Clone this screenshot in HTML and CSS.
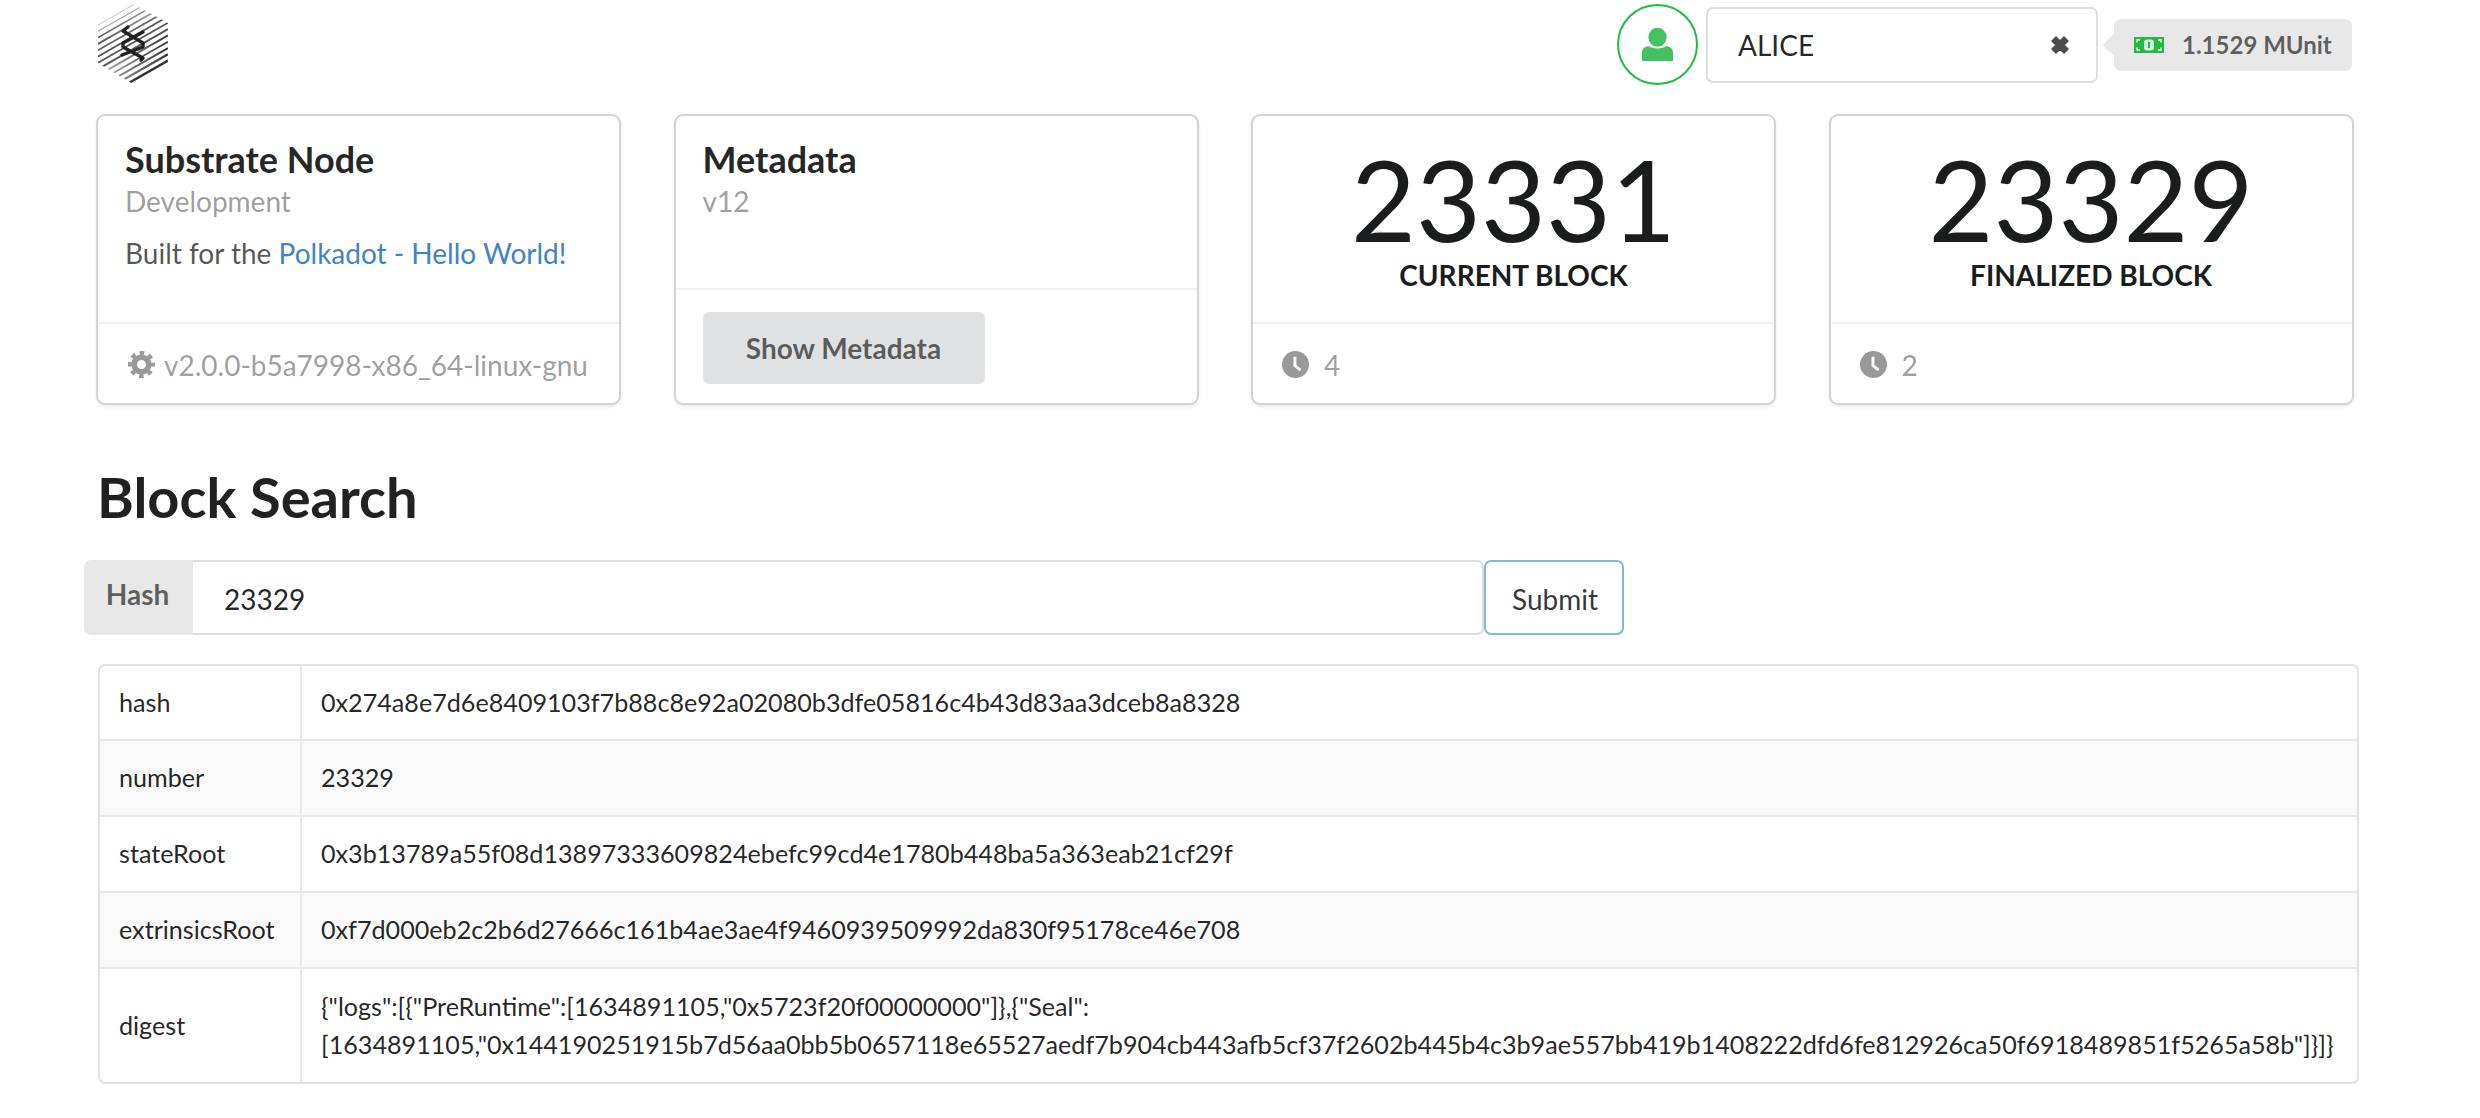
FILE: index.html
```html
<!DOCTYPE html>
<html lang="en">
<head>
<meta charset="utf-8">
<title>Substrate Front End</title>
<link rel="stylesheet" href="styles.css">
</head>
<body>
<div class="page">
  <header class="topbar">
    <svg class="logo" viewBox="0 0 70 80" aria-hidden="true">
      <defs>
        <clipPath id="hex"><path d="M35 0L70 19V59L35 80L0 59V19Z"/></clipPath>
        <linearGradient id="fadeTop" gradientUnits="userSpaceOnUse" x1="0" y1="0" x2="70" y2="0"><stop offset="0" stop-color="#555"/><stop offset="1" stop-color="#bbb"/></linearGradient>
        <linearGradient id="fadeBottom" gradientUnits="userSpaceOnUse" x1="0" y1="0" x2="70" y2="0"><stop offset="0" stop-color="#bbb"/><stop offset="0.6" stop-color="#666"/><stop offset="1" stop-color="#333"/></linearGradient>
      </defs>
      <g clip-path="url(#hex)" fill="none">
        <path d="M0 21L70 -19" stroke="#c4c4c4" stroke-width="1"/>
        <path d="M0 27.300L70 -12.700" stroke="#aaa" stroke-width="1.200"/>
        <path d="M0 33.600L70 -6.400" stroke="url(#fadeTop)" stroke-width="1.600"/>
        <path d="M0 39.900L70 -0.100" stroke="url(#fadeTop)" stroke-width="1.800"/>
        <path d="M0 46.200L70 6.200" stroke="#666" stroke-width="1.800"/>
        <path d="M0 52.500L70 12.500" stroke="#555" stroke-width="1.800"/>
        <path d="M0 58.800L70 18.800" stroke="#555" stroke-width="1.800"/>
        <path d="M0 65.100L70 25.100" stroke="#555" stroke-width="1.800"/>
        <path d="M0 71.400L70 31.400" stroke="url(#fadeBottom)" stroke-width="1.800"/>
        <path d="M0 77.700L70 37.700" stroke="url(#fadeBottom)" stroke-width="1.800"/>
        <path d="M0 84L70 44" stroke="url(#fadeBottom)" stroke-width="2"/>
        <path d="M0 90.300L70 50.300" stroke="url(#fadeBottom)" stroke-width="2.200"/>
        <path d="M0 96.600L70 56.600" stroke="#333" stroke-width="2.400"/>
      </g>
      <path d="M30 23L25 27L45 39V43L24 51M45 28L25 39V43L45 54L43 56" fill="none" stroke="#222" stroke-width="3.400" stroke-linejoin="round" stroke-linecap="round"/>
    </svg>
    <div class="account">
      <div class="avatar">
        <svg class="avatar-icon" viewBox="0 0 34 36" aria-hidden="true"><ellipse cx="17" cy="10" rx="10" ry="10.500" fill="#45c162"/><path d="M0 36V27C0 22 4 20 8 20C11 23 23 23 26 20C30 20 34 22 34 27V36Z" fill="#45c162"/></svg>
      </div>
      <div class="select">
        <span>ALICE</span>
        <svg class="close-icon" viewBox="0 0 20 20" aria-hidden="true"><path d="M2 6L6 2L10 6L14 2L18 6L14 10L18 14L14 18L10 14L6 18L2 14L6 10Z" fill="#4b4b4b" stroke="#4b4b4b" stroke-width="1.500" stroke-linejoin="round"/></svg>
      </div>
      <div class="balance">
        <svg class="bill" viewBox="0 0 30 16" aria-hidden="true"><rect width="30" height="16" fill="#21ba45"/><rect x="10" y="2.500" width="10" height="11" rx="3" fill="#d8f3de"/><path d="M3 5.500V3H6M24 3H27V5.500M27 10.500V13H24M6 13H3V10.500" fill="none" stroke="#fff" stroke-width="1.500"/><path d="M15 5V11" stroke="#21ba45" stroke-width="2"/></svg>
        <span>1.1529 MUnit</span>
      </div>
    </div>
  </header>

  <section class="cards">
    <article class="card">
      <div class="card-body">
        <h2 class="card-title">Substrate Node</h2>
        <div class="meta">Development</div>
        <p class="desc">Built for the <a href="#">Polkadot - Hello World!</a></p>
      </div>
      <div class="card-foot">
        <svg class="foot-icon" viewBox="0 0 24 24" aria-hidden="true"><circle cx="12" cy="12" r="6.500" fill="none" stroke="#999" stroke-width="5"/><circle cx="12" cy="12" r="10.300" fill="none" stroke="#999" stroke-width="3.400" stroke-dasharray="4.050 4.040" stroke-dashoffset="2"/></svg>
        <span>v2.0.0-b5a7998-x86_64-linux-gnu</span>
      </div>
    </article>
    <article class="card">
      <div class="card-body">
        <h2 class="card-title">Metadata</h2>
        <div class="meta">v12</div>
      </div>
      <div class="card-foot button-foot">
        <button class="show-btn" type="button">Show Metadata</button>
      </div>
    </article>
    <article class="card">
      <div class="card-body stat">
        <div class="stat-value">23331</div>
        <div class="stat-label">CURRENT BLOCK</div>
      </div>
      <div class="card-foot">
        <svg class="foot-icon clock" viewBox="0 0 24 24" aria-hidden="true"><circle cx="12" cy="12" r="12" fill="#999"/><path d="M11.500 5V13L16.500 17" fill="none" stroke="#fff" stroke-width="2.600"/></svg>
        <span>4</span>
      </div>
    </article>
    <article class="card">
      <div class="card-body stat">
        <div class="stat-value">23329</div>
        <div class="stat-label">FINALIZED BLOCK</div>
      </div>
      <div class="card-foot">
        <svg class="foot-icon clock" viewBox="0 0 24 24" aria-hidden="true"><circle cx="12" cy="12" r="12" fill="#999"/><path d="M11.500 5V13L16.500 17" fill="none" stroke="#fff" stroke-width="2.600"/></svg>
        <span>2</span>
      </div>
    </article>
  </section>

  <h1 class="heading">Block Search</h1>

  <form class="search">
    <div class="hash-label">Hash</div>
    <input class="hash-input" type="text" value="23329">
    <button class="submit" type="button">Submit</button>
  </form>

  <div class="table-wrap">
    <table class="details">
      <tbody>
        <tr><td class="key">hash</td><td>0x274a8e7d6e8409103f7b88c8e92a02080b3dfe05816c4b43d83aa3dceb8a8328</td></tr>
        <tr class="alt"><td class="key">number</td><td>23329</td></tr>
        <tr><td class="key">stateRoot</td><td>0x3b13789a55f08d13897333609824ebefc99cd4e1780b448ba5a363eab21cf29f</td></tr>
        <tr class="alt"><td class="key">extrinsicsRoot</td><td>0xf7d000eb2c2b6d27666c161b4ae3ae4f9460939509992da830f95178ce46e708</td></tr>
        <tr><td class="key">digest</td><td>{"logs":[{"PreRuntime":[1634891105,"0x5723f20f00000000"]},{"Seal":<br>[1634891105,"0x144190251915b7d56aa0bb5b0657118e65527aedf7b904cb443afb5cf37f2602b445b4c3b9ae557bb419b1408222dfd6fe812926ca50f6918489851f5265a58b"]}]}</td></tr>
      </tbody>
    </table>
  </div>
</div>
</body>
</html>
```
FILE: styles.css
```css
* { box-sizing: border-box; }
html, body { margin: 0; background: #fff; }
body {
  font-family: Lato, "Helvetica Neue", Arial, sans-serif;
  font-size: 28px;
  line-height: 1.3;
  color: rgba(0, 0, 0, 0.87);
}
.page { padding: 4px 128px 0 98px; }

.topbar { display: flex; justify-content: space-between; align-items: flex-start; height: 112px; }
.logo { width: 70px; height: 80px; flex: none; display: block; }
.account { display: flex; align-items: center; height: 81px; }
.avatar {
  width: 81px; height: 81px; border: 2px solid #21ba45; border-radius: 50%;
  display: flex; align-items: center; justify-content: center; margin-right: 8px;
}
.avatar-icon { width: 31px; height: 33px; }
.select {
  width: 392px; height: 76px; border: 2px solid #dedede; border-radius: 7px;
  padding: 0 26px 0 30px; display: flex; align-items: center; justify-content: space-between;
  font-size: 28px; line-height: 1;
}
.close-icon { width: 20px; height: 20px; }
.balance {
  position: relative; margin-left: 16px; width: 238px; height: 52px;
  background: #e8e8e8; border-radius: 7px; display: flex; align-items: center;
  padding-left: 20px; font-size: 24px; font-weight: 700; color: rgba(0, 0, 0, 0.6); line-height: 1;
}
.balance::before {
  content: ""; position: absolute; left: -8px; top: 18px; width: 16px; height: 16px;
  background: #e8e8e8; transform: rotate(45deg);
}
.bill { width: 30px; height: 16px; margin-right: 18px; }

.cards { display: grid; grid-template-columns: repeat(4, 521px); column-gap: 56.500px; height: 287px; }
.card {
  display: flex; flex-direction: column; background: #fff; border-radius: 7px;
  box-shadow: 0 2px 5px 0 #d4d4d5, 0 0 0 2px #d4d4d5; min-width: 0;
}
.card-body { flex: 1; padding: 20px 27px 0; }
.card-title { margin: 0; font-size: 36px; line-height: 47px; font-weight: 700; }
.meta { color: rgba(0, 0, 0, 0.4); font-size: 28px; line-height: 36px; margin-top: 0; }
.desc { margin: 16px 0 0; font-size: 28px; line-height: 36px; color: rgba(0, 0, 0, 0.68); white-space: nowrap; }
.desc a { color: #4183c4; text-decoration: none; }
.card-foot {
  height: 81px; border-top: 2px solid #f2f2f3; padding: 2px 30px 0;
  display: flex; align-items: center; color: rgba(0, 0, 0, 0.4); font-size: 28px; line-height: 1;
  white-space: nowrap;
}
.button-foot { height: 115px; padding: 2px 27px 0; }
.foot-icon { width: 27px; height: 27px; margin-right: 9px; flex: none; }
.clock { margin: 0 15px 0 -1px; }
.show-btn {
  width: 282px; height: 72px; border: 0; border-radius: 7px; background: #e0e1e2;
  color: rgba(0, 0, 0, 0.6); font: 700 28px Lato, sans-serif; padding: 0;
}
.stat { padding: 27px 0 0; text-align: center; }
.stat-value { font-size: 112px; line-height: 1; color: #1b1c1d; }
.stat-label { font-size: 28px; font-weight: 700; line-height: 34px; color: #1b1c1d; margin-top: 3px; }

.heading { margin: 60px 0 0 -1px; font-size: 56px; line-height: 67px; font-weight: 700; }

.search { display: flex; margin: 30px 0 0 -14px; height: 75px; }
.hash-label {
  width: 109px; background: #e8e8e8; border-radius: 7px 0 0 7px; display: flex; align-items: center;
  justify-content: center; font-weight: 700; color: rgba(0, 0, 0, 0.6); font-size: 28px; padding: 0 2px 6px 0;
}
.hash-input {
  width: 1291px; border: 2px solid #dedede; border-left: 0; border-radius: 0 7px 7px 0; padding: 2px 31px 0;
  font: 28px Lato, sans-serif; color: rgba(0, 0, 0, 0.87); outline: 0;
}
.submit {
  width: 140px; background: #fff; border: 2px solid #85b7d9; border-radius: 7px;
  font: 28px Lato, sans-serif; color: rgba(0, 0, 0, 0.8); padding: 2px 0 0 2px;
}

.table-wrap { margin: 29px -7px 0 0; border: 2px solid #e3e3e3; border-radius: 7px; overflow: hidden; }
.details { width: 100%; border-collapse: collapse; font-size: 25.150px; color: rgba(0, 0, 0, 0.87); }
.details td { padding: 0 19px 2px; height: 76px; border-top: 2px solid #e9e9e9; line-height: 38px; }
.details tr:first-child td { border-top: 0; height: 74px; }
.details tr:last-child td { height: 114px; }
.details .key { width: 201px; border-right: 2px solid #e9e9e9; }
.alt { background: #f9f9f9; }
```
